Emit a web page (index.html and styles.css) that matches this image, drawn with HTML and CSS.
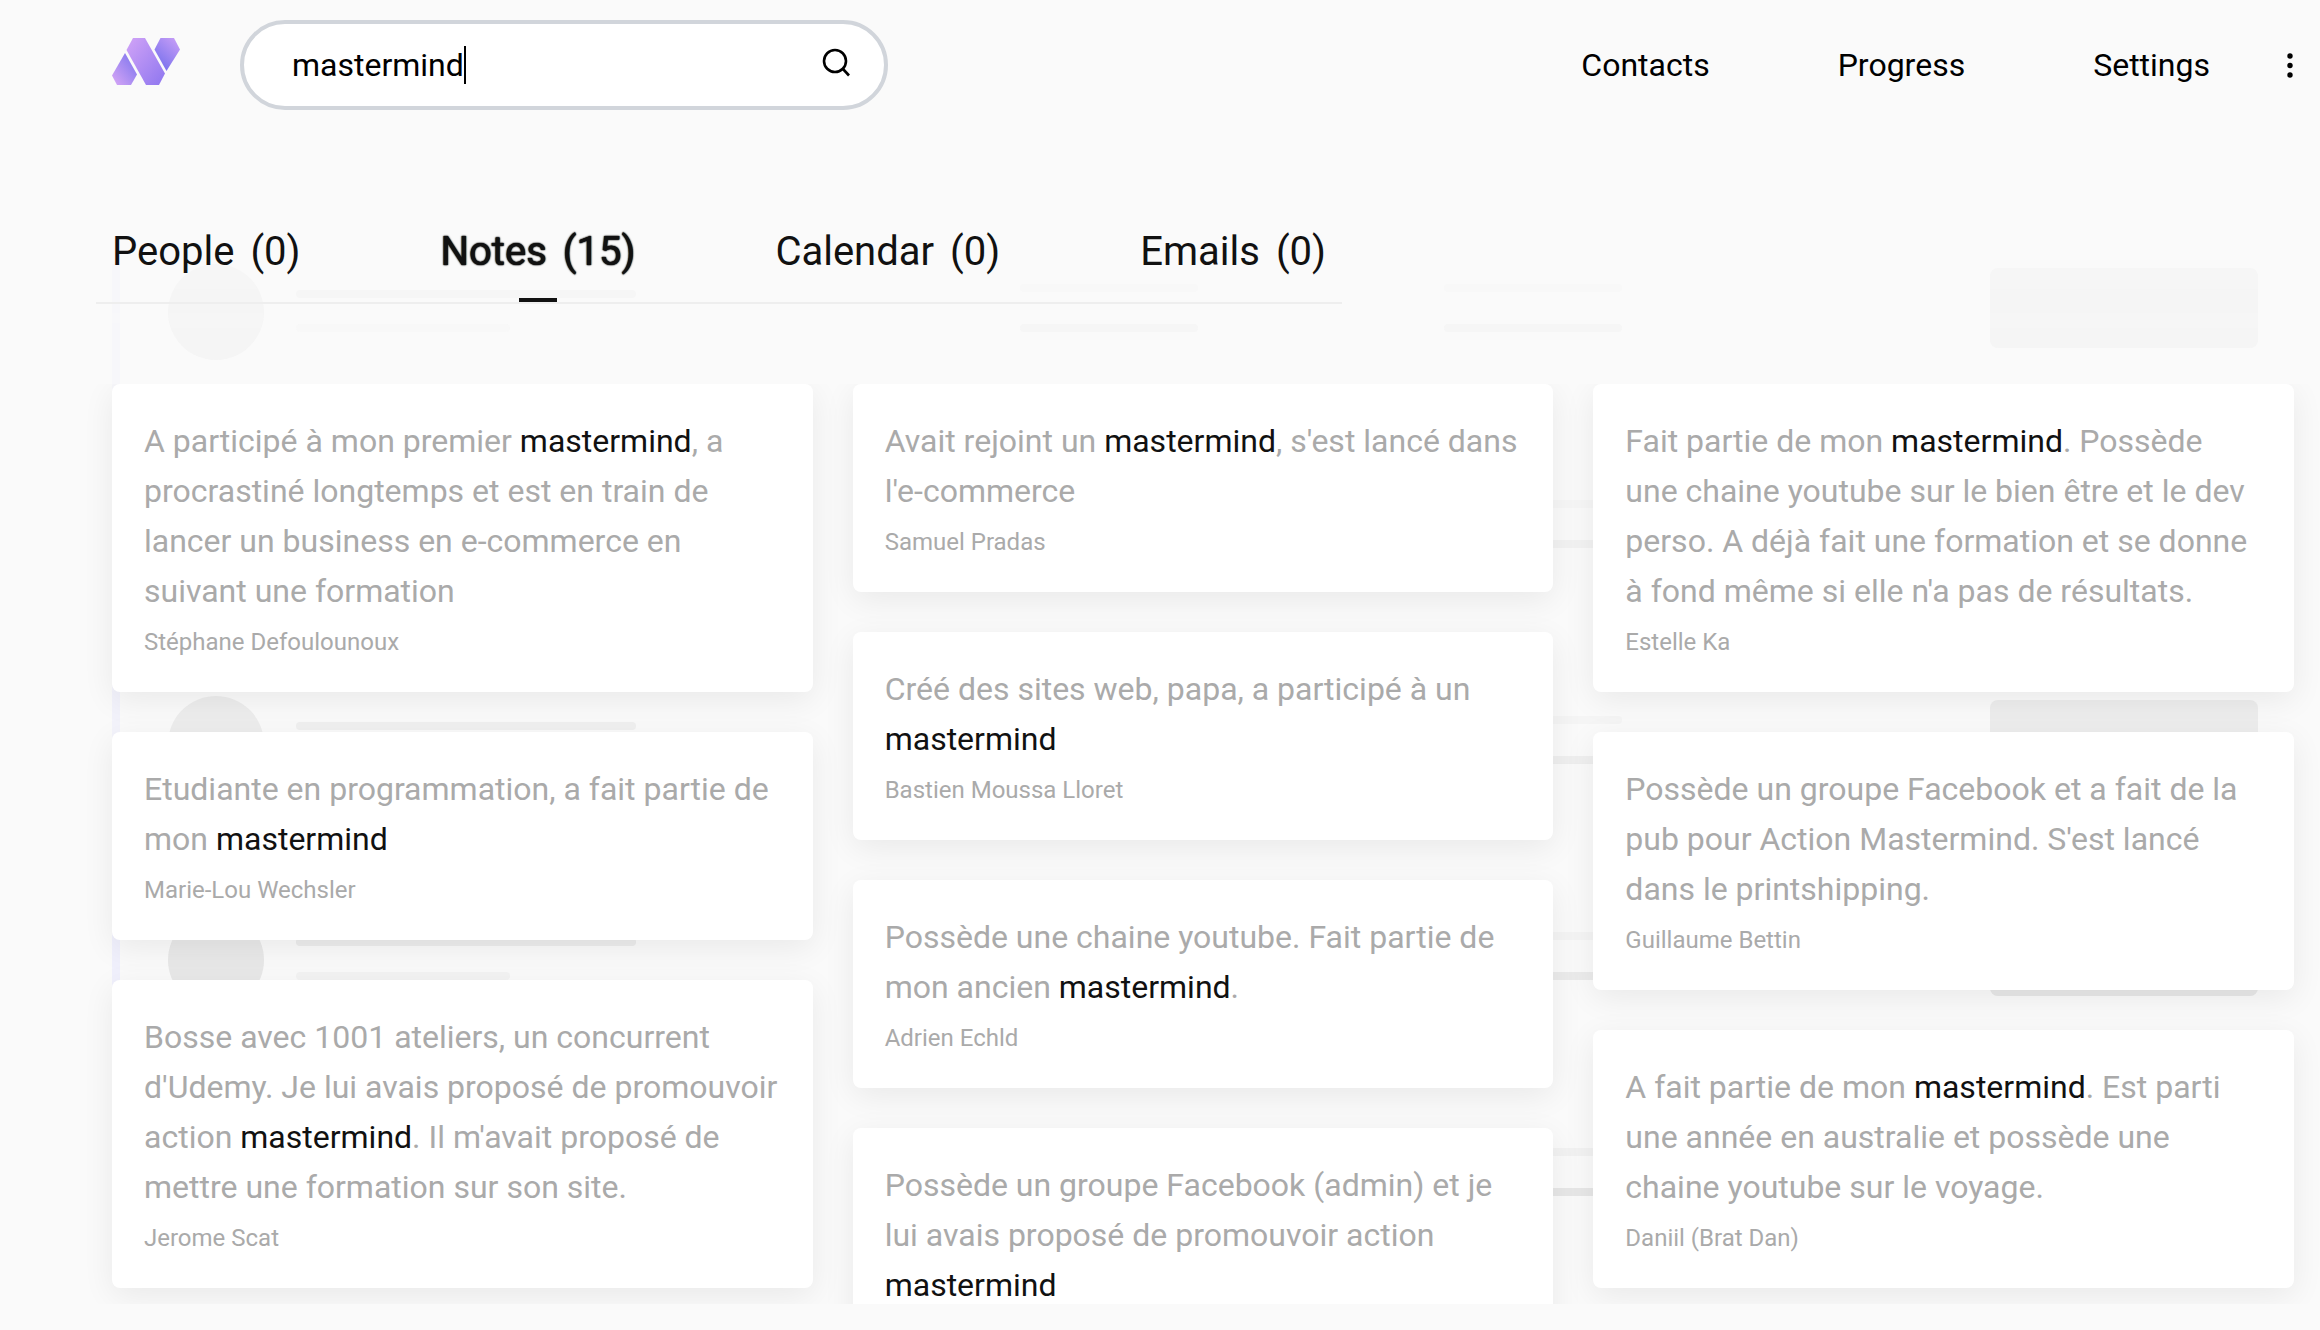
FILE: index.html
```html
<!DOCTYPE html>
<html lang="fr">
<head>
<meta charset="utf-8">
<meta name="viewport" content="width=device-width, initial-scale=1">
<title>Search: mastermind</title>
<link rel="stylesheet" href="styles.css">
</head>
<body>
<div class="skeleton" aria-hidden="true">
  <div class="skeleton-row"><i class="avatar"></i><div class="lines lines-name"><i></i><i></i></div><div class="lines"><i></i><i></i></div><div class="lines"><i></i><i></i></div><i class="action"></i></div>
  <div class="skeleton-row"><i class="avatar"></i><div class="lines lines-name"><i></i><i></i></div><div class="lines"><i></i><i></i></div><div class="lines"><i></i><i></i></div><i class="action"></i></div>
  <div class="skeleton-row"><i class="avatar"></i><div class="lines lines-name"><i></i><i></i></div><div class="lines"><i></i><i></i></div><div class="lines"><i></i><i></i></div><i class="action"></i></div>
  <div class="skeleton-row"><i class="avatar"></i><div class="lines lines-name"><i></i><i></i></div><div class="lines"><i></i><i></i></div><div class="lines"><i></i><i></i></div><i class="action"></i></div>
  <div class="skeleton-row"><i class="avatar"></i><div class="lines lines-name"><i></i><i></i></div><div class="lines"><i></i><i></i></div><div class="lines"><i></i><i></i></div><i class="action"></i></div>
</div>
<div class="page">
  <header class="topbar">
    <a class="logo" href="#" aria-label="Home">
      <svg width="68" height="48" viewBox="0 0 68 48">
        <defs>
          <linearGradient id="up" x1="0" y1="1" x2="1" y2="0"><stop offset="0.1" stop-color="#cfa2f5"/><stop offset="0.9" stop-color="#8177ee"/></linearGradient>
          <linearGradient id="mid" x1="0" y1="0" x2="1" y2="1"><stop offset="0.1" stop-color="#cb9ff6"/><stop offset="0.9" stop-color="#957bf0"/></linearGradient>
          <linearGradient id="down" x1="1" y1="0" x2="0.3" y2="1"><stop offset="0.1" stop-color="#c49cf6"/><stop offset="0.9" stop-color="#7f75ee"/></linearGradient>
        </defs>
        <path fill="url(#up)" d="M13 15 25 36.500 19 47H5L0 37.500Z"/>
        <path fill="url(#mid)" d="M21 0H33L53 35.500 47 47H34L14.500 12Z"/>
        <path fill="url(#down)" d="M48.500 0H62L68 11.500 54.500 33 42.500 11.500Z"/>
      </svg>
    </a>
    <form class="search">
      <input class="search-input" type="text" aria-label="Search" value="mastermind">
      <span class="caret"></span>
      <button class="search-button" type="button" aria-label="Search">
        <svg width="32" height="32" viewBox="0 0 32 32" fill="none" stroke="#000" stroke-width="2.600"><circle cx="15" cy="14" r="11"/><path d="M22.500 21.500 29 28.500"/></svg>
      </button>
    </form>
    <nav class="nav">
      <a href="#">Contacts</a>
      <a href="#">Progress</a>
      <a href="#">Settings</a>
    </nav>
    <button class="more" type="button" aria-label="More">
      <svg width="8" height="26" viewBox="0 0 8 26"><circle cx="4" cy="4" r="2.700"/><circle cx="4" cy="13.500" r="2.700"/><circle cx="4" cy="23" r="2.700"/></svg>
    </button>
  </header>

  <nav class="tabs" aria-label="Results">
    <button class="tab" type="button"><span>People</span><span>(0)</span></button>
    <button class="tab tab-active" type="button"><span>Notes</span><span>(15)</span></button>
    <button class="tab" type="button"><span>Calendar</span><span>(0)</span></button>
    <button class="tab" type="button"><span>Emails</span><span>(0)</span></button>
  </nav>

  <main class="results">
    <div class="column">
      <article class="note"><p>A participé à mon premier <mark>mastermind</mark>, a procrastiné longtemps et est en train de lancer un business en e-commerce en suivant une formation</p><footer>Stéphane Defoulounoux</footer></article>
      <article class="note"><p>Etudiante en programmation, a fait partie de mon <mark>mastermind</mark></p><footer>Marie-Lou Wechsler</footer></article>
      <article class="note"><p>Bosse avec 1001 ateliers, un concurrent d'Udemy. Je lui avais proposé de promouvoir action <mark>mastermind</mark>. Il m'avait proposé de mettre une formation sur son site.</p><footer>Jerome Scat</footer></article>
    </div>
    <div class="column">
      <article class="note"><p>Avait rejoint un <mark>mastermind</mark>, s'est lancé dans l'e-commerce</p><footer>Samuel Pradas</footer></article>
      <article class="note"><p>Créé des sites web, papa, a participé à un <mark>mastermind</mark></p><footer>Bastien Moussa Lloret</footer></article>
      <article class="note"><p>Possède une chaine youtube. Fait partie de mon ancien <mark>mastermind</mark>.</p><footer>Adrien Echld</footer></article>
      <article class="note"><p>Possède un groupe Facebook (admin) et je lui avais proposé de promouvoir action <mark>mastermind</mark></p></article>
    </div>
    <div class="column">
      <article class="note"><p>Fait partie de mon <mark>mastermind</mark>. Possède une chaine youtube sur le bien être et le dev perso. A déjà fait une formation et se donne à fond même si elle n'a pas de résultats.</p><footer>Estelle Ka</footer></article>
      <article class="note"><p>Possède un groupe Facebook et a fait de la pub pour Action Mastermind. S'est lancé dans le printshipping.</p><footer>Guillaume Bettin</footer></article>
      <article class="note"><p>A fait partie de mon <mark>mastermind</mark>. Est parti une année en australie et possède une chaine youtube sur le voyage.</p><footer>Daniil (Brat Dan)</footer></article>
    </div>
  </main>
</div>
</body>
</html>
```
FILE: styles.css
```css
* { box-sizing: border-box; }

body {
  margin: 0;
  background: #fafafa;
  color: #000;
  font-family: Roboto, "Liberation Sans", sans-serif;
  font-size: 32px;
}

button {
  border: 0;
  padding: 0;
  background: none;
  color: inherit;
  font: inherit;
}

svg { display: block; }

.page {
  position: relative;
  display: flex;
  flex-direction: column;
  height: 100vh;
  padding-bottom: 26px;
  overflow: hidden;
}

/* Header */
.topbar {
  display: flex;
  align-items: center;
  flex: none;
  padding: 20px 26px 0 112px;
}

.logo { padding-bottom: 7px; }

.search {
  display: flex;
  align-items: center;
  width: 648px;
  height: 90px;
  margin-left: 60px;
  padding: 0 32px 0 48px;
  border: 4px solid #d1d5db;
  border-radius: 45px;
  background: #fff;
}

.search-input {
  field-sizing: content;
  min-width: 0;
  padding: 0;
  border: 0;
  outline: 0;
  background: none;
  color: #000;
  caret-color: transparent;
  font: inherit;
}

.caret {
  width: 2px;
  height: 38px;
  background: #000;
}

.search-button {
  margin-left: auto;
  padding-bottom: 4px;
}

.nav {
  display: flex;
  gap: 128px;
  margin-left: auto;
}

.nav a {
  color: #000;
  text-decoration: none;
}

.more { margin-left: 76px; }

/* Tabs */
.tabs {
  display: flex;
  flex: none;
  gap: 140px;
  align-self: flex-start;
  height: 84px;
  margin: 110px 0 80px 96px;
  padding: 0 16px;
  border-bottom: 2px solid #eee;
  color: #111;
  font-size: 40px;
}

.tab {
  display: flex;
  position: relative;
  gap: 16px;
  padding-top: 8px;
  line-height: 48px;
}

.tab-active { text-shadow: 0 0 1px #111, 0 0 1px #111, 0 0 2px #111; }

.tab-active::after {
  content: "";
  position: absolute;
  bottom: 0;
  left: 50%;
  width: 38px;
  height: 4px;
  margin-left: -19px;
  background: #111;
}

/* Results */
.results {
  display: grid;
  grid-template-columns: repeat(3, 1fr);
  gap: 40px;
  flex: 1;
  min-height: 0;
  padding: 0 26px 0 112px;
  overflow: hidden;
}

.column {
  display: flex;
  flex-direction: column;
  gap: 40px;
}

.note {
  padding: 32px;
  border-radius: 8px;
  background: #fff;
  box-shadow: 0 8px 32px rgba(0, 0, 0, 0.07);
  color: #aaa;
}

.note p {
  margin: 0;
  line-height: 50px;
}

.note mark {
  background: none;
  color: #111;
}

.note footer {
  margin-top: 8px;
  font-size: 24px;
  line-height: 36px;
}

/* Placeholder list behind the results, faded towards the top */
.skeleton {
  position: absolute;
  top: 0;
  right: 0;
  left: 112px;
  height: 1280px;
  overflow: hidden;
  padding-top: 264px;
  -webkit-mask-image: linear-gradient(transparent 110px, #000 1330px);
  mask-image: linear-gradient(transparent 110px, #000 1330px);
}

.skeleton i { display: block; }

.skeleton-row {
  display: grid;
  grid-template-columns: 96px 692px 392px 1fr 268px;
  column-gap: 32px;
  height: 216px;
  padding: 0 62px 0 48px;
  border-left: 8px solid #ebebfc;
}

.avatar {
  width: 96px;
  height: 96px;
  border-radius: 50%;
  background: #e0e0e0;
}

.action {
  height: 80px;
  margin-top: 4px;
  border-radius: 8px;
  background: #e0e0e0;
}

.lines { padding-top: 20px; }

.lines i {
  width: 178px;
  height: 8px;
  border-radius: 4px;
  background: #f0f0f0;
}

.lines i + i {
  margin-top: 32px;
  background: #e4e4e4;
}

.lines-name { padding-top: 26px; }

.lines-name i {
  width: 340px;
  background: #e6e6e6;
}

.lines-name i + i {
  width: 214px;
  margin-top: 26px;
  background: #f0f0f0;
}
```
